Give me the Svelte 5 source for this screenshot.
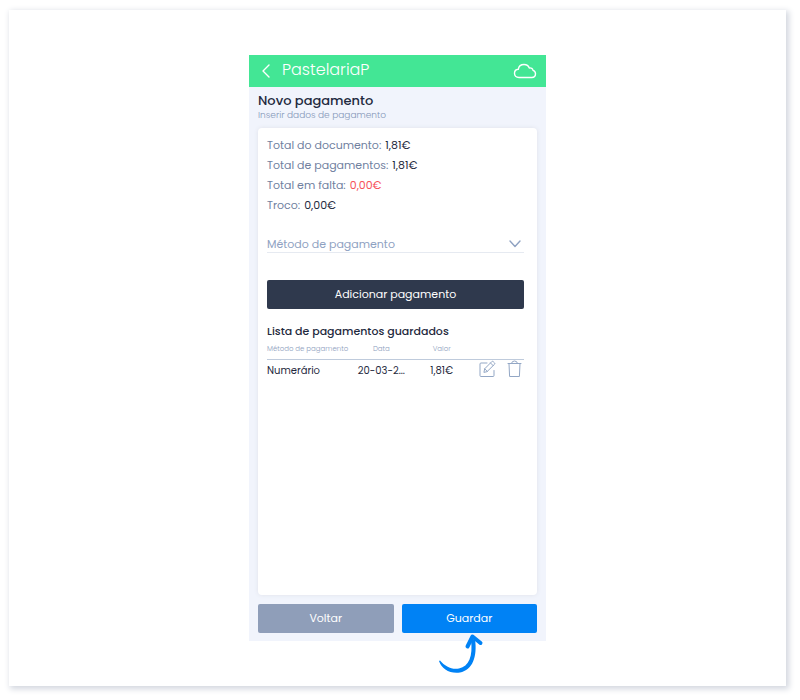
<script>

	let shop = 'PastelariaP';
	let method = '';

	let totals = [
		{ label: 'Total do documento:', value: '1,81€' },
		{ label: 'Total de pagamentos:', value: '1,81€' },
		{ label: 'Total em falta:', value: '0,00€', missing: true },
		{ label: 'Troco:', value: '0,00€' }
	];

	let payments = [
		{ method: 'Numerário', date: '20-03-2...', value: '1,81€' }
	];

	function removePayment(payment) {
		payments = payments.filter((p) => p !== payment);
	}

</script>

<div class="page">
	<div class="sheet">
		<main class="phone">

			<header>
				<button class="icon" aria-label="Retroceder">
					<svg width="10" height="14" viewBox="0 0 10 14">
						<path d="M8 1 L2 7 L8 13"/>
					</svg>
				</button>
				<span class="shop">{shop}</span>
				<svg class="cloud" width="24" height="16" viewBox="0 0 24 16">
					<path d="M6 14.5 C3 14.5 1.5 12.6 1.5 10.3 C1.5 8 3 6.500 5.300 6.300 C5.800 3.200 8.200 1.500 11 1.500 C13.700 1.500 15.600 2.900 16.300 5 C18.200 4.600 19.700 5.700 20 7.300 C21.700 7.800 22.500 9.100 22.500 10.800 C22.500 13 21 14.500 18.800 14.500 Z"/>
				</svg>
			</header>

			<div class="content">
				<h1>Novo pagamento</h1>
				<p class="subtitle">Inserir dados de pagamento</p>

				<section class="card">
					<dl>
						{#each totals as total}
							<div>
								<dt>{total.label}</dt>
								<dd class:missing={total.missing}>{total.value}</dd>
							</div>
						{/each}
					</dl>

					<div class="field">
						<select aria-label="Método de pagamento" bind:value={method}>
							<option value="">Método de pagamento</option>
							<option value="numerario">Numerário</option>
						</select>
						<svg width="12" height="8" viewBox="0 0 12 8">
							<path d="M1 1 L6 6.500 L11 1"/>
						</svg>
					</div>

					<button class="btn add">Adicionar pagamento</button>

					<h2>Lista de pagamentos guardados</h2>
					<table>
						<thead>
							<tr>
								<th class="method">Método de pagamento</th>
								<th class="date">Data</th>
								<th class="value">Valor</th>
								<th class="actions"></th>
							</tr>
						</thead>
						<tbody>
							{#each payments as payment}
								<tr>
									<td>{payment.method}</td>
									<td class="date">{payment.date}</td>
									<td class="value">{payment.value}</td>
									<td>
										<div class="tools">
											<button class="icon" aria-label="Editar">
												<svg width="17" height="18" viewBox="0 0 17 18">
													<path d="M8 3 H2 Q1 3 1 4 V15.500 Q1 16.500 2 16.500 H14 Q15 16.500 15 15.500 V10.500"/>
													<path d="M5 12 L5.700 8.800 L12.800 1.600 Q13.500 1 14.200 1.600 L15.500 2.900 Q16.200 3.600 15.500 4.300 L8.300 11.400 Z M11.500 3 L14.200 5.700 M5.700 8.800 L8.300 11.400"/>
												</svg>
											</button>
											<button class="icon" aria-label="Apagar" on:click={() => removePayment(payment)}>
												<svg width="15" height="18" viewBox="0 0 15 18">
													<path d="M1 3.500 H14 M2 3.500 L2.600 16.500 H12.400 L13 3.500 M4.500 3.300 Q4.800 1 7.500 1 Q10.200 1 10.500 3.300"/>
												</svg>
											</button>
										</div>
									</td>
								</tr>
							{/each}
						</tbody>
					</table>
				</section>

				<footer>
					<button class="btn back">Voltar</button>
					<div class="save">
						<button class="btn">Guardar</button>
						<svg class="arrow" width="46" height="42" viewBox="0 0 46 42">
							<path class="swoosh" d="M2 27.500 C7 33.500 14 37 21 35.500 C31 33.500 35 23 33 7 L37 6 C39.500 24 34.500 37 22 39.500 C12 41 3.500 36 1 28 Z"/>
							<path class="head" d="M29.500 13.500 L34.500 3.500 L42.500 10"/>
						</svg>
					</div>
				</footer>
			</div>

		</main>
	</div>
</div>

<style>

	:global(body) {
		background: #fff;
	}

	.page {
		display: flex;
		min-height: 100vh;
		box-sizing: border-box;
		padding: 10px 14px 14px 9px;
		font-family: Poppins, Inter, "Open Sans", sans-serif;
		color: #1f2a40;
	}

	.sheet {
		display: flex;
		flex: 1;
		justify-content: center;
		padding: 45px 16px;
		background: #fff;
		box-shadow: 2px 2px 6px 1px #d3d7df;
	}

	.phone {
		display: flex;
		flex-direction: column;
		width: 100%;
		max-width: 297px;
		background: #f1f4fc;
	}

	header {
		display: flex;
		align-items: center;
		height: 32px;
		padding: 0 9px 0 12px;
		background: #43e695;
		color: #fff;
	}

	.shop {
		flex: 1;
		margin-left: 11px;
		padding-bottom: 2px;
		font-size: 16px;
		font-weight: 300;
		line-height: 28px;
	}

	button {
		font-family: inherit;
		border: 0;
		cursor: pointer;
	}

	.icon {
		display: flex;
		padding: 0;
		background: none;
		color: inherit;
	}

	svg path {
		fill: none;
		stroke: currentColor;
		stroke-width: 1px;
		stroke-linecap: round;
		stroke-linejoin: round;
	}

	header svg path {
		stroke-width: 1.4px;
	}

	.content {
		display: flex;
		flex: 1;
		flex-direction: column;
		padding: 4px 9px 8px;
	}

	h1 {
		margin: 0;
		font-size: 13px;
		font-weight: 500;
		line-height: 19px;
	}

	.subtitle {
		margin: 0 0 7px;
		font-size: 9px;
		font-weight: 300;
		line-height: 11px;
		color: #8496b8;
	}

	.card {
		flex: 1;
		padding: 7px 13px 16px 9px;
		background: #fff;
		border-radius: 4px;
		box-shadow: 0 0 4px #dfe2ea;
	}

	dl {
		margin: 0;
		font-size: 11px;
		line-height: 20px;
	}

	dl div {
		display: flex;
		gap: 4px;
	}

	dt {
		color: #71819f;
	}

	dd {
		margin: 0;
	}

	.missing {
		color: #f65258;
	}

	.field {
		position: relative;
		margin: 20px 0 27px;
		color: #8fa2c2;
	}

	select {
		display: block;
		width: 100%;
		height: 18px;
		padding: 0;
		border: 0;
		border-bottom: 1px solid #e6eaf1;
		appearance: none;
		background: none;
		font-family: inherit;
		font-size: 11px;
		color: inherit;
	}

	.field svg {
		position: absolute;
		top: 5px;
		right: 3px;
		pointer-events: none;
	}

	.field svg path {
		stroke-width: 1.4px;
	}

	.btn {
		display: block;
		width: 100%;
		height: 29px;
		padding: 0;
		border-radius: 2px;
		background: #0082f5;
		color: #fff;
		font-size: 11px;
	}

	.add {
		background: #2f394d;
	}

	h2 {
		margin: 13px 0 2px;
		font-size: 11px;
		font-weight: 500;
		line-height: 18px;
	}

	table {
		width: 100%;
		table-layout: fixed;
		border-collapse: collapse;
	}

	th {
		height: 13px;
		padding: 0 0 4px;
		border-bottom: 1px solid #bfcbdc;
		font-size: 7px;
		font-weight: 300;
		line-height: 10px;
		text-align: left;
		color: #8c9dbd;
	}

	td {
		padding: 0;
		font-size: 10px;
		line-height: 22px;
		white-space: nowrap;
		vertical-align: top;
	}

	th.method {
		width: 35%;
	}

	th.date {
		width: 19%;
	}

	th.value {
		width: 28%;
	}

	.date,
	.value {
		text-align: center;
	}

	.tools {
		display: flex;
		justify-content: flex-end;
		gap: 11px;
		padding-right: 2px;
		color: #93a7c5;
	}

	footer {
		display: flex;
		gap: 8px;
		margin-top: 9px;
	}

	footer > * {
		flex: 1;
	}

	.back {
		background: #8f9eb9;
	}

	.save {
		position: relative;
	}

	.arrow {
		position: absolute;
		top: 100%;
		left: 50%;
		margin-left: -31px;
		color: #0082f5;
	}

	.arrow .swoosh {
		fill: currentColor;
		stroke: none;
	}

	.arrow .head {
		stroke-width: 4px;
	}

</style>
